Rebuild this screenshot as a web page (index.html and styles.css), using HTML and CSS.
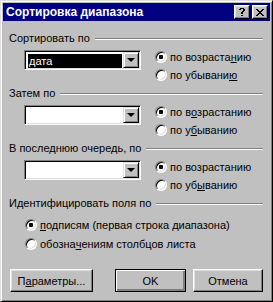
FILE: index.html
```html
<!DOCTYPE html>
<html lang="ru">
<head>
  <meta charset="UTF-8">
  <title>Сортировка диапазона</title>
  <link rel="stylesheet" href="styles.css">
</head>
<body>
  <div class="window">
    <div class="titlebar">
      <span class="title">Сортировка диапазона</span>
      <div class="caption-btns">
        <span class="cbtn">
          <svg width="6" height="8" viewBox="0 0 6 8" shape-rendering="crispEdges">
            <path d="M1 0h4v1h-4z M0 1h2v1h-2z M4 1h2v2h-2z M3 3h2v1h-2z M2 4h2v2h-2z M2 7h2v1h-2z" fill="#000"/>
          </svg>
        </span>
        <span class="cbtn">
          <svg width="8" height="7" viewBox="0 0 8 7" shape-rendering="crispEdges">
            <path d="M0 0h2v1h-2z M6 0h2v1h-2z M1 1h2v1h-2z M5 1h2v1h-2z M2 2h4v1h-4z M3 3h2v1h-2z M2 4h4v1h-4z M1 5h2v1h-2z M5 5h2v1h-2z M0 6h2v1h-2z M6 6h2v1h-2z" fill="#000"/>
          </svg>
        </span>
      </div>
    </div>

    <div class="content">
      <section class="group">
        <div class="group-head"><span>Сортировать по</span><i class="etch"></i></div>
        <div class="group-row">
          <div class="combo">
            <div class="combo-field"><span class="combo-sel">дата</span></div>
            <span class="combo-btn"><i class="arrow"></i></span>
          </div>
          <div class="radios">
            <label class="radio"><span class="dot checked"></span>по возраста<u>н</u>ию</label>
            <label class="radio"><span class="dot"></span>по убывани<u>ю</u></label>
          </div>
        </div>
      </section>

      <section class="group">
        <div class="group-head"><span>Затем по</span><i class="etch"></i></div>
        <div class="group-row">
          <div class="combo">
            <div class="combo-field"></div>
            <span class="combo-btn"><i class="arrow"></i></span>
          </div>
          <div class="radios">
            <label class="radio"><span class="dot checked"></span>по в<u>о</u>зрастанию</label>
            <label class="radio"><span class="dot"></span>по у<u>б</u>ыванию</label>
          </div>
        </div>
      </section>

      <section class="group">
        <div class="group-head"><span>В последнюю очередь, по</span><i class="etch"></i></div>
        <div class="group-row">
          <div class="combo">
            <div class="combo-field"></div>
            <span class="combo-btn"><i class="arrow"></i></span>
          </div>
          <div class="radios">
            <label class="radio"><span class="dot checked"></span>по возрастанию</label>
            <label class="radio"><span class="dot"></span>по уб<u>ы</u>ванию</label>
          </div>
        </div>
      </section>

      <section class="group last">
        <div class="group-head"><span>Идентифицировать поля по</span><i class="etch"></i></div>
        <div class="radios wide">
          <label class="radio"><span class="dot checked"></span><u>п</u>одписям (первая строка диапазона)</label>
          <label class="radio"><span class="dot"></span>обозна<u>ч</u>ениям столбцов листа</label>
        </div>
      </section>

      <div class="buttons">
        <button class="btn btn-params" type="button">П<u>а</u>раметры...</button>
        <button class="btn btn-ok default" type="button">OK</button>
        <button class="btn btn-cancel" type="button">Отмена</button>
      </div>
    </div>
  </div>
</body>
</html>
```

FILE: styles.css
```css
* {
  box-sizing: border-box;
}
body {
  margin: 0;
  font-family: "Liberation Sans", Arial, sans-serif;
  font-size: 11px;
  color: #000;
  background: #c0c0c0;
}
.window {
  width: 273px;
  height: 302px;
  background: #c0c0c0;
  border: 1px solid;
  border-color: #dfdfdf #000 #000 #dfdfdf;
  box-shadow: inset 1px 1px #fff, inset -1px -1px #808080;
  padding: 2px;
}
.titlebar {
  height: 18px;
  background: #000080;
  display: flex;
  align-items: center;
  justify-content: space-between;
  padding: 0 2px 0 3px;
}
.title {
  color: #fff;
  font-weight: bold;
  font-size: 12px;
}
.caption-btns {
  display: flex;
  gap: 2px;
}
.cbtn {
  width: 16px;
  height: 14px;
  background: #c0c0c0;
  border: 1px solid;
  border-color: #fff #000 #000 #fff;
  box-shadow: inset -1px -1px #808080, inset 1px 1px #dfdfdf;
  display: flex;
  align-items: center;
  justify-content: center;
}
.cbtn svg {
  display: block;
}

.content {
  padding: 11px 7px 0 6px;
}
.group {
  margin-bottom: 3px;
}
.group-head {
  display: flex;
  align-items: center;
  height: 13px;
  line-height: 13px;
  margin-bottom: 3px;
}
.etch {
  flex: 1;
  height: 2px;
  margin-left: 5px;
  border-top: 1px solid #808080;
  border-bottom: 1px solid #fff;
}
.group-row {
  display: flex;
  align-items: flex-start;
  padding-left: 15px;
}

.combo {
  width: 117px;
  height: 20px;
  margin-top: 2px;
  margin-right: 14px;
  display: flex;
  background: #fff;
  border: 1px solid;
  border-color: #808080 #fff #fff #808080;
  box-shadow: inset 1px 1px #000, inset -1px -1px #dfdfdf;
  padding: 2px 1px 1px 2px;
}
.combo-field {
  flex: 1;
  padding: 1px;
  height: 16px;
}
.combo-sel {
  display: block;
  height: 14px;
  line-height: 14px;
  background: #000;
  color: #fff;
  padding-left: 1px;
}
.combo-btn {
  width: 16px;
  height: 16px;
  margin-top: -1px;
  background: #c0c0c0;
  border: 1px solid;
  border-color: #dfdfdf #000 #000 #dfdfdf;
  box-shadow: inset 1px 1px #fff, inset -1px -1px #808080;
  display: flex;
  align-items: center;
  justify-content: center;
}
.arrow {
  width: 0;
  height: 0;
  border-left: 4px solid transparent;
  border-right: 4px solid transparent;
  border-top: 4px solid #000;
}

.radios {
  display: flex;
  flex-direction: column;
}
.radios.wide {
  padding-left: 16px;
  padding-top: 2px;
}
.radio {
  display: flex;
  align-items: center;
  height: 18px;
  white-space: nowrap;
}
.radios.wide .radio {
  height: 19px;
}
.dot {
  width: 12px;
  height: 12px;
  margin-right: 3px;
  border-radius: 50%;
  background: #fff;
  border: 1px solid;
  border-color: #808080 #fff #fff #808080;
  box-shadow: inset 1px 1px #000, inset -1px -1px #dfdfdf;
  position: relative;
}
.dot.checked::after {
  content: "";
  position: absolute;
  left: 3px;
  top: 3px;
  width: 4px;
  height: 4px;
  border-radius: 1px;
  background: #000;
}

.buttons {
  display: flex;
  margin-top: 16px;
  padding-left: 1px;
}
.btn {
  height: 23px;
  font: inherit;
  color: #000;
  background: #c0c0c0;
  border: 1px solid;
  border-color: #fff #000 #000 #fff;
  box-shadow: inset -1px -1px #808080, inset 1px 1px #dfdfdf;
  padding: 0;
}
.btn-params {
  width: 83px;
}
.btn-ok {
  width: 71px;
  margin-left: 22px;
}
.btn-cancel {
  width: 70px;
  margin-left: 7px;
}
.btn.default {
  border: 1px solid #000;
  box-shadow: inset 1px 1px #fff, inset -1px -1px #808080, inset -2px -2px #808080;
}
```
